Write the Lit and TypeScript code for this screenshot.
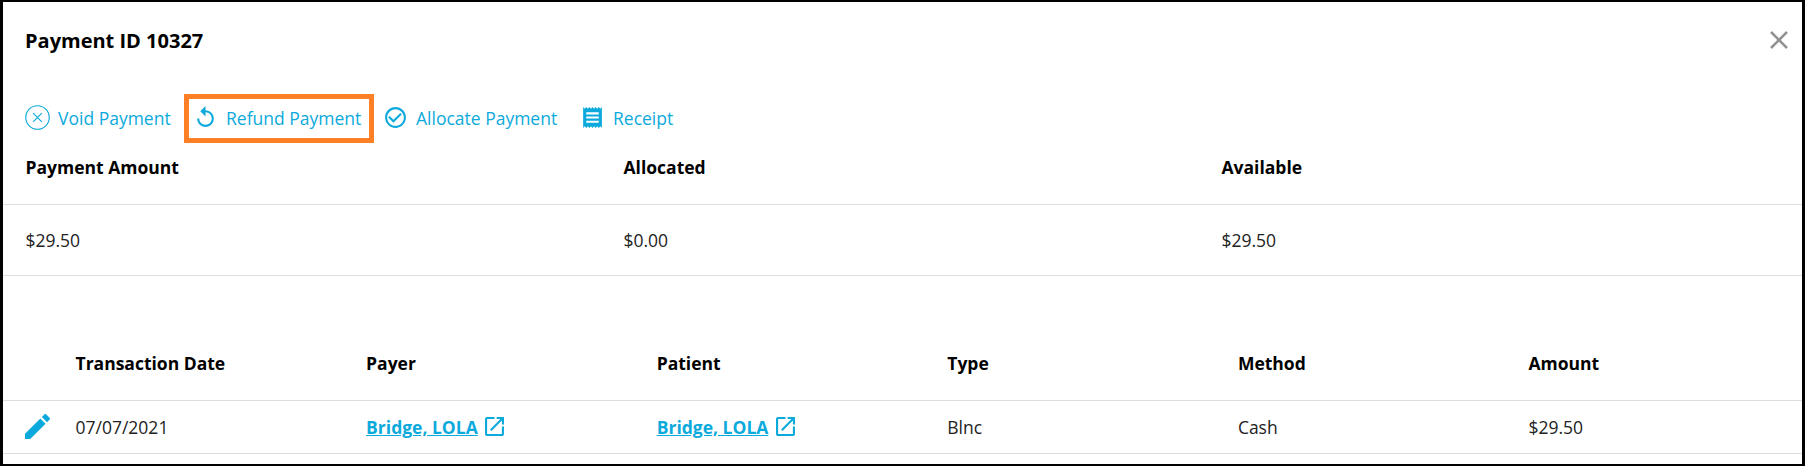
import { LitElement, html, css } from "lit";
import { customElement } from "lit/decorators.js";

const icons = {
  void: html`<svg class="i-void" viewBox="0 0 26 26"><g fill="none" stroke="currentColor"><circle cx="13" cy="13" r="12.200" stroke-width="1.200"/><path d="M8.500 8.500l9 9M17.500 8.500l-9 9" stroke-width="1.200"/></g></svg>`,
  refund: html`<svg class="i-mat" viewBox="0 0 24 24"><path fill="currentColor" d="M12 5V1L7 6l5 5V7c3.310 0 6 2.690 6 6s-2.690 6-6 6-6-2.690-6-6H4c0 4.420 3.580 8 8 8s8-3.580 8-8-3.580-8-8-8z"/></svg>`,
  allocate: html`<svg class="i-mat" viewBox="0 0 24 24"><path fill="currentColor" d="M16.590 7.580L10 14.170l-3.590-3.580L5 12l5 5 8-8zM12 2C6.480 2 2 6.480 2 12s4.480 10 10 10 10-4.480 10-10S17.520 2 12 2zm0 18c-4.420 0-8-3.580-8-8s3.580-8 8-8 8 3.580 8 8-3.580 8-8 8z"/></svg>`,
  receipt: html`<svg class="i-mat" viewBox="0 0 24 24"><path fill="currentColor" d="M18 17H6v-2h12v2zm0-4H6v-2h12v2zm0-4H6V7h12v2zM3 22l1.500-1.500L6 22l1.500-1.500L9 22l1.500-1.500L12 22l1.500-1.500L15 22l1.500-1.500L18 22l1.500-1.500L21 22V2l-1.500 1.500L18 2l-1.500 1.500L15 2l-1.500 1.500L12 2l-1.500 1.500L9 2 7.500 3.500 6 2 4.500 3.500 3 2v20z"/></svg>`,
  open: html`<svg class="i-open" viewBox="3 3 18 18"><path fill="currentColor" d="M19 19H5V5h7V3H5c-1.110 0-2 .9-2 2v14c0 1.100.89 2 2 2h14c1.100 0 2-.9 2-2v-7h-2v7zM14 3v2h3.590l-9.830 9.830 1.410 1.410L19 6.410V10h2V3h-7z"/></svg>`,
  edit: html`<svg class="i-edit" viewBox="3 3 18 18"><path fill="currentColor" d="M3 17.250V21h3.750L17.810 9.940l-3.750-3.750L3 17.250zM20.710 7.040c.39-.39.39-1.020 0-1.410l-2.340-2.340c-.39-.39-1.020-.39-1.410 0l-1.830 1.830 3.750 3.750 1.830-1.830z"/></svg>`,
  close: html`<svg class="i-close" viewBox="0 0 18 18"><path fill="none" stroke="currentColor" stroke-width="2.500" d="M1 1l16 16M17 1L1 17"/></svg>`,
};

@customElement("app-root")
export class AppRoot extends LitElement {
  static styles = css`
    :host { display: block; font-family: "Open Sans", "Noto Sans", sans-serif; font-size: 17.5px; color: #222; }
    * { box-sizing: border-box; }
    svg { display: block; flex: none; }
    .dialog { width: 1805px; height: 466px; background: #fff; border: solid #000; border-width: 2px 3px; overflow: hidden; }
    .head { display: flex; justify-content: space-between; align-items: center; height: 78px; padding: 0 14px 0 22px; }
    h1 { margin: 0; font-size: 20px; line-height: 28px; font-weight: 700; color: #000; }
    .i-close { width: 18px; height: 18px; margin-bottom: 2px; color: #919191; }
    .actions { display: flex; align-items: center; height: 76px; padding-left: 22px; color: #0caadc; }
    .action { display: flex; align-items: center; height: 49px; font-weight: 400; white-space: nowrap; }
    .action svg { margin-bottom: 2px; }
    .action.void { gap: 8px; width: 159px; }
    .action.refund { gap: 8px; width: 190px; padding-left: 4px; border: 5px solid #ff7f27; }
    .action.allocate { gap: 8px; width: 197px; padding-left: 9px; }
    .action.receipt { gap: 8px; padding-left: 9px; }
    .i-void { width: 25px; height: 25px; }
    .i-mat { width: 25px; height: 25px; }
    .row { display: grid; align-items: center; border-bottom: 1px solid #ddd; font-weight: 400; }
    .summary { grid-template-columns: 598px 598px 1fr; padding-left: 22.5px; }
    .detail { grid-template-columns: 50.5px repeat(6, 290.6px); padding-left: 22px; }
    .row.th { font-weight: 700; color: #000; }
    .summary.th { height: 49px; align-items: start; line-height: 22px; }
    .summary.td { height: 71px; }
    .detail.th { height: 75px; margin-top: 50px; }
    .detail.td { height: 53px; }
    .i-edit { width: 25px; height: 25px; margin-bottom: 1px; color: #0caadc; }
    .link { display: flex; align-items: center; gap: 7.5px; color: #0caadc; }
    .link a { font-weight: 700; text-decoration: underline; }
    .i-open { width: 19px; height: 19px; margin-bottom: 1px; }
  `;

  person(name: string) {
    return html`<div class="link"><a>${name}</a>${icons.open}</div>`;
  }

  render() {
    return html`<div class="dialog">
      <div class="head"><h1>Payment ID 10327</h1>${icons.close}</div>
      <div class="actions">
        <div class="action void">${icons.void}<span>Void Payment</span></div>
        <div class="action refund">${icons.refund}<span>Refund Payment</span></div>
        <div class="action allocate">${icons.allocate}<span>Allocate Payment</span></div>
        <div class="action receipt">${icons.receipt}<span>Receipt</span></div>
      </div>
      <div class="row summary th">${["Payment Amount", "Allocated", "Available"].map((t) => html`<div>${t}</div>`)}</div>
      <div class="row summary td">${["$29.50", "$0.00", "$29.50"].map((t) => html`<div>${t}</div>`)}</div>
      <div class="row detail th">${["", "Transaction Date", "Payer", "Patient", "Type", "Method", "Amount"].map((t) => html`<div>${t}</div>`)}</div>
      <div class="row detail td">
        <div>${icons.edit}</div><div>07/07/2021</div>${this.person("Bridge, LOLA")}${this.person("Bridge, LOLA")}
        <div>Blnc</div><div>Cash</div><div>$29.50</div>
      </div>
    </div>`;
  }
}
